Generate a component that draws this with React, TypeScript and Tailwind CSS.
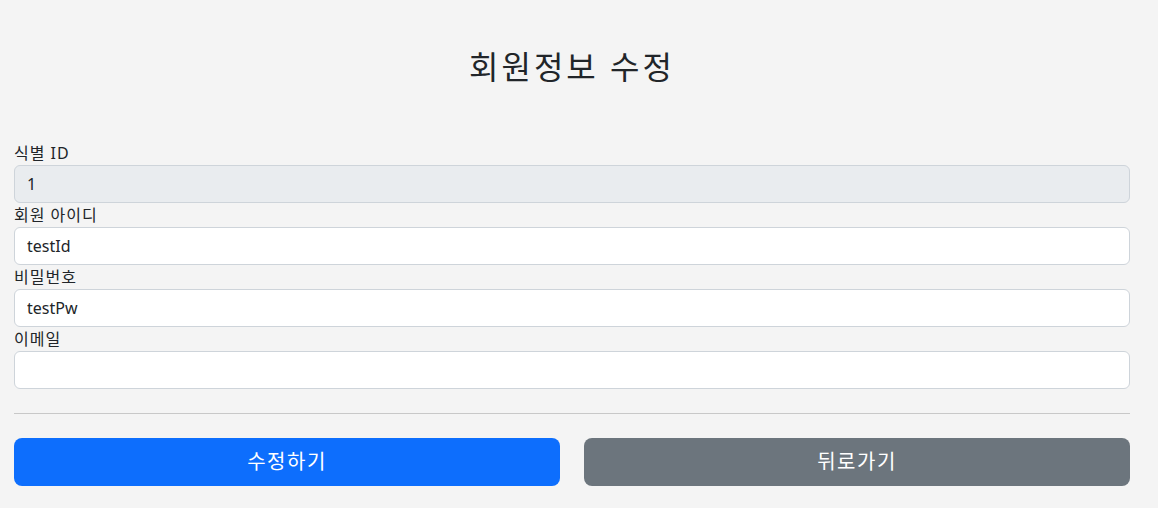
import React from "react";

const font = { fontFamily: '"Noto Sans", "Noto Sans CJK KR", sans-serif' };

function Field({ label, value, disabled }: { label: string; value: string; disabled?: boolean }) {
  return (
    <div className="flex flex-col">
      <label className="h-[24px] text-[16px] leading-[24px] tracking-[1px] text-[#212529]">{label}</label>
      <input
        readOnly
        disabled={disabled}
        value={value}
        className={`h-[38px] w-full rounded-[6px] border border-[#ced4da] px-[12px] text-[16px] leading-[24px] text-[#212529] outline-none ${disabled ? "bg-[#e9ecef]" : "bg-white"}`}
        style={font}
      />
    </div>
  );
}

export default function App() {
  return (
    <div className="min-h-[508px] w-full bg-[#f4f4f4]" style={font}>
      <div className="px-[14px] w-[1144px]">
        <div className="pt-[48px] pb-[47px] text-center">
          <h2 className="mb-2 text-[32px] font-normal leading-[38px] tracking-[3px] text-[#212529]">회원정보 수정</h2>
        </div>
        <div className="flex flex-col">
          <Field label="식별 ID" value="1" disabled />
          <Field label="회원 아이디" value="testId" />
          <Field label="비밀번호" value="testPw" />
          <Field label="이메일" value="" />
        </div>
        <hr className="my-[24px] border-0 border-t border-[#c8c8c8]" />
        <div className="grid grid-cols-2 gap-[24px]">
          <button className="h-[48px] rounded-[8px] bg-[#0d6efd] text-[20px] leading-[30px] tracking-[1.5px] text-white">수정하기</button>
          <button className="h-[48px] rounded-[8px] bg-[#6c757d] text-[20px] leading-[30px] tracking-[1.5px] text-white">뒤로가기</button>
        </div>
      </div>
    </div>
  );
}
